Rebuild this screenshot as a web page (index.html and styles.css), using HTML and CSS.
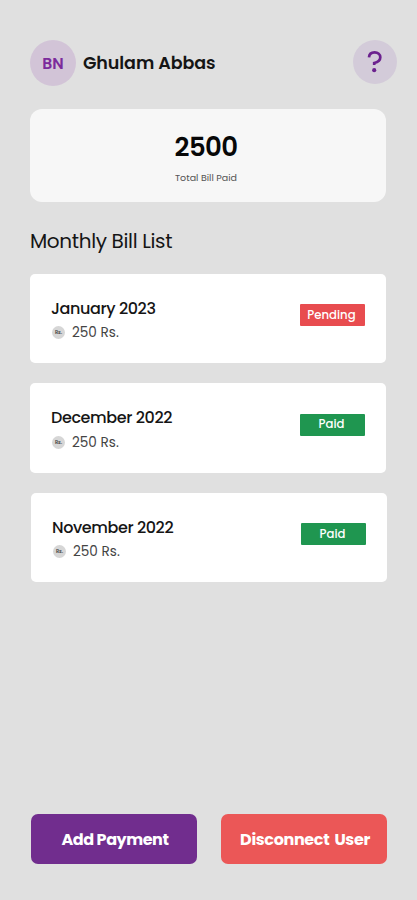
FILE: index.html
```html
<!DOCTYPE html>
<html lang="en">
<head>
<meta charset="utf-8">
<title>Monthly Bill List</title>
<link rel="stylesheet" href="styles.css">
</head>
<body>
<main class="screen">
  <header class="header">
    <div class="avatar"><span>BN</span></div>
    <h1 class="name">Ghulam Abbas</h1>
    <button class="help" aria-label="Help">
      <svg width="16" height="24" viewBox="0 0 16 24" fill="none"><path d="M2 7.4C2.2 4.2 4.4 2.4 7.6 2.4C10.9 2.4 13.3 4.3 13.3 7.3C13.3 10.4 10.7 12.2 7.2 13V15" stroke="#6b218e" stroke-width="2.7"/><circle cx="7.2" cy="20.2" r="2.1" fill="#6b218e"/></svg>
    </button>
  </header>
  <section class="total">
    <strong class="amount">2500</strong>
    <span class="caption">Total Bill Paid</span>
  </section>
  <h2 class="title">Monthly Bill List</h2>
  <section class="bills">
    <article class="bill">
      <div class="info"><h3 class="month">January 2023</h3><p class="price"><i class="coin">Rs.</i><span>250 Rs.</span></p></div>
      <span class="badge pending">Pending</span>
    </article>
    <article class="bill">
      <div class="info"><h3 class="month">December 2022</h3><p class="price"><i class="coin">Rs.</i><span>250 Rs.</span></p></div>
      <span class="badge paid">Paid</span>
    </article>
    <article class="bill shifted">
      <div class="info"><h3 class="month">November 2022</h3><p class="price"><i class="coin">Rs.</i><span>250 Rs.</span></p></div>
      <span class="badge paid">Paid</span>
    </article>
  </section>
  <footer class="actions">
    <button class="action add">Add Payment</button>
    <button class="action disconnect">Disconnect User</button>
  </footer>
</main>
</body>
</html>
```
FILE: styles.css
```css
* { box-sizing: border-box; }
body { margin: 0; background: #e0e0e0; color: #151515; font-family: Poppins, Inter, "Open Sans", sans-serif; }
h1, h2, h3, p { margin: 0; white-space: nowrap; }
button { border: 0; padding: 0; font-family: inherit; }
.screen { height: 900px; padding: 39px 30px 36px; display: flex; flex-direction: column; }
.header { height: 46px; display: flex; align-items: center; margin-right: -10px; }
.avatar { width: 46px; height: 46px; margin-top: 2px; border-radius: 50%; background: #d2c4d7; color: #7c2a9c; display: grid; place-items: center; font-size: 15.5px; font-weight: 600; }
.name { margin: 1px 0 0 7px; font-size: 17.5px; line-height: 26px; font-weight: 600; letter-spacing: -0.08px; }
.help { width: 44px; height: 44px; margin-left: auto; border-radius: 50%; background: #d3cbd9; display: grid; place-items: center; }
.total { width: 356px; height: 92.5px; margin-top: 24px; border-radius: 12px; background: #f7f7f7; display: flex; flex-direction: column; align-items: center; padding: 20px 4px 0 0; }
.amount { font-size: 26px; line-height: 36px; font-weight: 600; color: #080808; letter-spacing: -0.6px; }
.caption { margin-top: 6px; font-size: 9.5px; line-height: 14px; color: #555; letter-spacing: 0; }
.title { margin-top: 24px; font-size: 20px; line-height: 30px; font-weight: 400; letter-spacing: -0.35px; }
.bills { display: grid; gap: 20px; margin-top: 18px; }
.bill { width: 356px; height: 89.5px; border-radius: 5px; background: #fff; display: flex; justify-content: space-between; align-items: flex-start; padding: 23px 21.5px 0 21px; }
.shifted { margin-left: 1px; }
.month { font-size: 16px; line-height: 24px; font-weight: 500; letter-spacing: -0.4px; }
.price { display: flex; align-items: center; gap: 7px; margin-top: 1.5px; padding-left: 1px; font-size: 13.6px; line-height: 21px; color: #444; }
.coin { width: 13px; height: 13px; border-radius: 50%; background: #d6d6d6; font-size: 5px; line-height: 13px; font-style: normal; font-weight: 600; text-align: center; }
.badge { width: 65px; height: 22px; margin-top: 7.5px; padding-right: 1px; border-radius: 1px; color: #fff; display: grid; place-items: center; font-size: 11.7px; font-weight: 500; }
.pending { background: #e84c4f; }
.paid { background: #1f9650; }
.actions { display: flex; gap: 24px; margin: auto -1px 0 1px; }
.action { width: 166px; height: 50px; border-radius: 7px; color: #fff; font-size: 16px; font-weight: 700; white-space: nowrap; }
.add { background: #712d8e; padding-left: 2px; letter-spacing: -0.45px; }
.disconnect { background: #eb5757; padding-left: 2px; letter-spacing: -0.35px; word-spacing: 2px; }
```
